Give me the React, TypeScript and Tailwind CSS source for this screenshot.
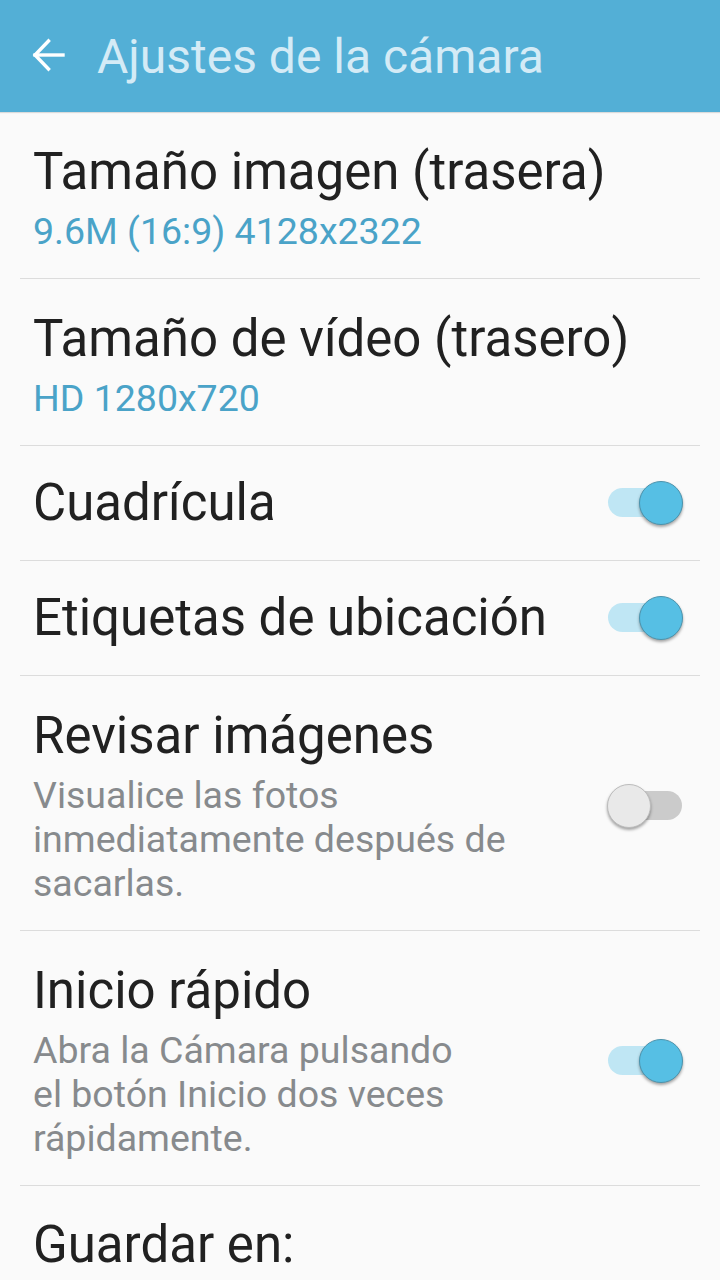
import React from "react";

type Row = {
  title: string;
  sub?: string[];
  subBlue?: boolean;
  toggle?: boolean | null;
};

const Toggle = ({ on }: { on: boolean }) => (
  <div className="relative h-[44px] w-[76px] shrink-0">
    <div
      className={`absolute left-[1px] top-[7px] h-[29px] w-[74px] rounded-full ${
        on ? "bg-[#bfe6f4]" : "bg-[#cbcbcb]"
      }`}
    />
    <div
      className={`absolute top-0 h-[44px] w-[44px] rounded-full border shadow-[0_2px_3px_rgba(0,0,0,0.35)] ${
        on
          ? "right-0 bg-[#56bfe4] border-[#4b93ad]"
          : "left-0 bg-[#e9e9e9] border-[#bcbcbc]"
      }`}
    />
  </div>
);

const Divider = () => <div className="mx-5 h-px bg-[#dcdcdc]" />;

export default function App() {
  const rows: Row[] = [
    { title: "Tamaño imagen (trasera)", sub: ["9.6M (16:9) 4128x2322"], subBlue: true },
    { title: "Tamaño de vídeo (trasero)", sub: ["HD 1280x720"], subBlue: true },
    { title: "Cuadrícula", toggle: true },
    { title: "Etiquetas de ubicación", toggle: true },
    {
      title: "Revisar imágenes",
      sub: ["Visualice las fotos", "inmediatamente después de", "sacarlas."],
      toggle: false,
    },
    {
      title: "Inicio rápido",
      sub: ["Abra la Cámara pulsando", "el botón Inicio dos veces", "rápidamente."],
      toggle: true,
    },
  ];

  return (
    <div
      className="min-h-[1280px] w-[720px] overflow-hidden bg-[#fafafa] text-[#212121]"
      style={{ fontFamily: "Roboto, 'Noto Sans', sans-serif" }}
    >
      <div className="flex h-[112px] items-center bg-[#53afd6] shadow-[0_1px_1px_rgba(0,0,0,0.12)]">
        <svg
          width="34"
          height="34"
          viewBox="0 0 34 34"
          className="ml-[32px] mb-[2px]"
          fill="none"
          stroke="white"
          strokeWidth="3.4"
          strokeLinecap="square"
        >
          <path d="M3 17H31" />
          <path d="M16.5 3L3 17L16.5 31" />
        </svg>
        <span className="ml-[31px] mt-[2px] text-[48px] leading-none text-[#d4ebf6]">
          Ajustes de la cámara
        </span>
      </div>

      {rows.map((r, i) => (
        <div key={i}>
          {r.sub ? (
            <div className="flex items-center justify-between pl-[33px] pr-[37px] pt-[30px] pb-[25px]">
              <div>
                <div className="text-[51px] leading-[60px]">{r.title}</div>
                <div
                  className={`mt-[7px] text-[37.5px] leading-[44px] ${
                    r.subBlue ? "text-[#4aa3c8]" : "text-[#878a8d]"
                  }`}
                >
                  {r.sub.map((s, j) => (
                    <div key={j}>{s}</div>
                  ))}
                </div>
              </div>
              {r.toggle !== undefined && r.toggle !== null && <Toggle on={r.toggle} />}
            </div>
          ) : (
            <div className="flex h-[114px] items-center justify-between pl-[33px] pr-[37px]">
              <div className="text-[51px] leading-[60px]">{r.title}</div>
              {r.toggle !== undefined && r.toggle !== null && <Toggle on={r.toggle} />}
            </div>
          )}
          <Divider />
        </div>
      ))}

      <div className="pl-[33px] pt-[29px]">
        <div className="text-[51px] leading-[60px]">Guardar en:</div>
      </div>
    </div>
  );
}
